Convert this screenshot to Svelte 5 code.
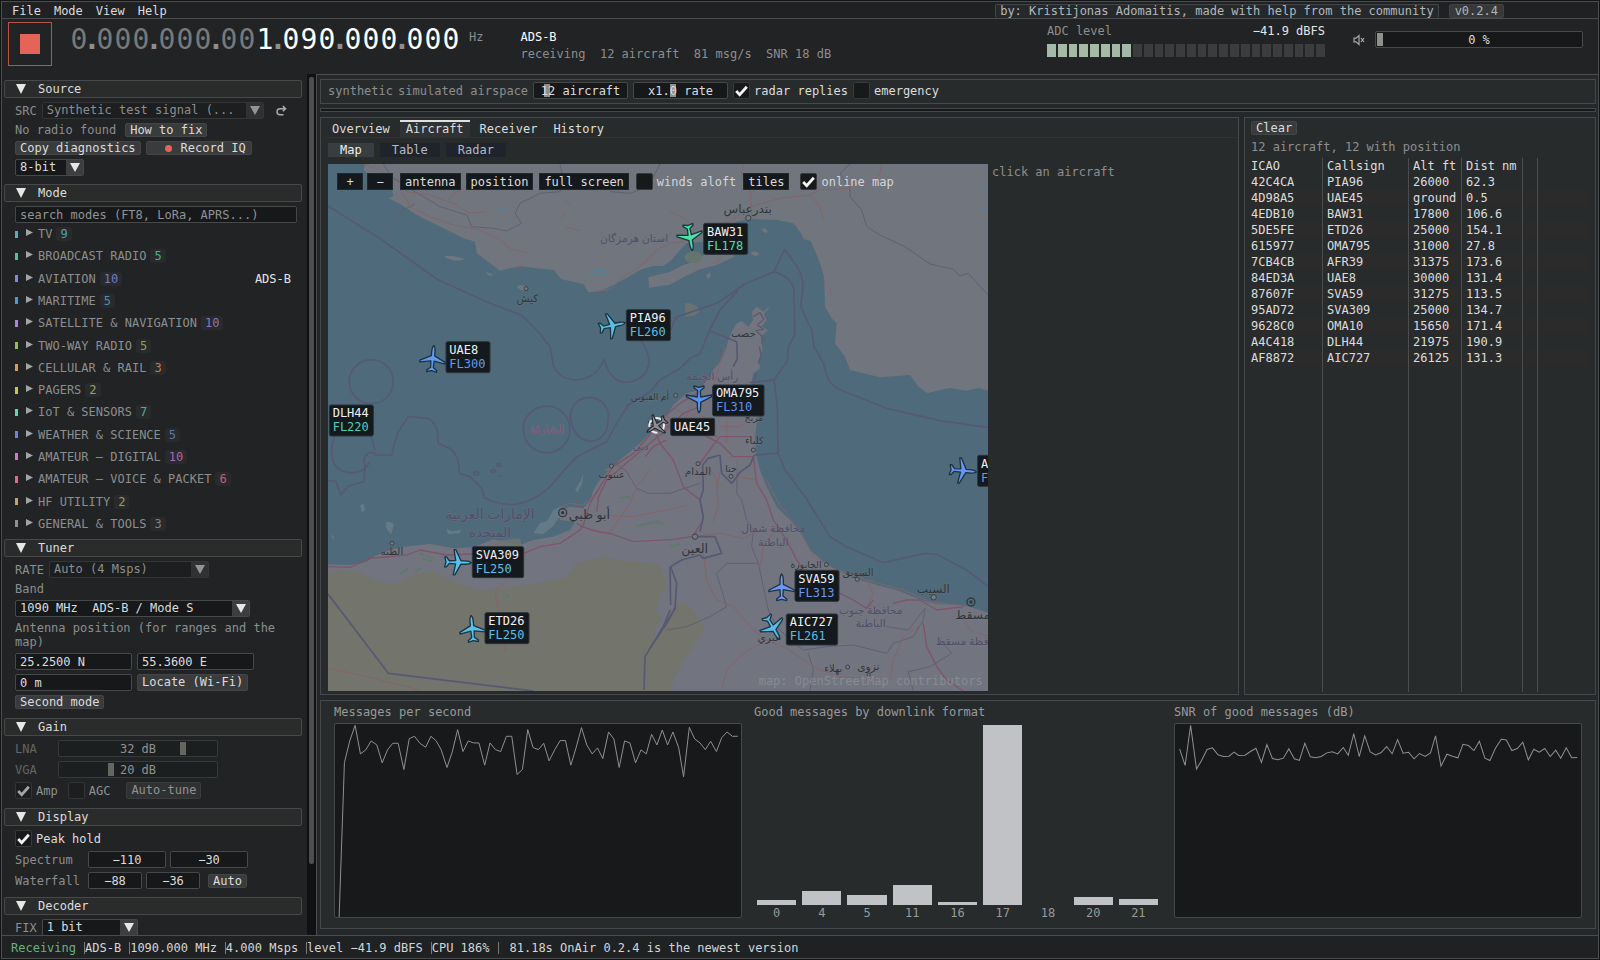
<script>
  const menus = ['File', 'Mode', 'View', 'Help'];

  const frequency = [...'0.000.000.001.090.000.000'].map((char, i) => ({ char, lit: i >= 12 }));

  const meter = Array.from({ length: 26 }, (_, i) => i < 8);

  const modes = [
    { name: 'TV', count: 9, color: '#5aa9cc', text: '#4fa3ac' },
    { name: 'BROADCAST RADIO', count: 5, color: '#4fc596', text: '#4bb389' },
    { name: 'AVIATION', count: 10, color: '#8189dd', text: '#737cc0', current: 'ADS-B' },
    { name: 'MARITIME', count: 5, color: '#4b9cc8', text: '#4a8fb5' },
    { name: 'SATELLITE & NAVIGATION', count: 10, color: '#ab84dc', text: '#8e74b8' },
    { name: 'TWO-WAY RADIO', count: 5, color: '#8fbf5f', text: '#8ba253' },
    { name: 'CELLULAR & RAIL', count: 3, color: '#d19f5a', text: '#b5834f' },
    { name: 'PAGERS', count: 2, color: '#c8c755', text: '#a0a44c' },
    { name: 'IoT & SENSORS', count: 7, color: '#66d3b3', text: '#54ab93' },
    { name: 'WEATHER & SCIENCE', count: 5, color: '#6b85dc', text: '#5f74b5' },
    { name: 'AMATEUR – DIGITAL', count: 10, color: '#cf7acb', text: '#b064ae' },
    { name: 'AMATEUR – VOICE & PACKET', count: 6, color: '#e06d81', text: '#c75c75' },
    { name: 'HF UTILITY', count: 2, color: '#bba673', text: '#9d9a64' },
    { name: 'GENERAL & TOOLS', count: 3, color: '#8e9194', text: '#808386' }
  ];

  const aircraft = [
    ['42C4CA', 'PIA96', '26000', '62.3'],
    ['4D98A5', 'UAE45', 'ground', '0.5'],
    ['4EDB10', 'BAW31', '17800', '106.6'],
    ['5DE5FE', 'ETD26', '25000', '154.1'],
    ['615977', 'OMA795', '31000', '27.8'],
    ['7CB4CB', 'AFR39', '31375', '173.6'],
    ['84ED3A', 'UAE8', '30000', '131.4'],
    ['87607F', 'SVA59', '31275', '113.5'],
    ['95AD72', 'SVA309', '25000', '134.7'],
    ['9628C0', 'OMA10', '15650', '171.4'],
    ['A4C418', 'DLH44', '21975', '190.9'],
    ['AF8872', 'AIC727', '26125', '131.3']
  ];

  const formats = [
    ['0', 5], ['4', 14], ['5', 10], ['11', 20], ['16', 3], ['17', 180], ['18', 0], ['20', 8], ['21', 6]
  ];

  const messageLine =
    '73,711 86,245 99,180 112,133 125,219 138,207 151,180 165,192 178,246 191,207 204,187 217,187 231,266 244,173 257,166 270,187 284,199 297,166 310,180 322,207 336,260 349,213 362,146 375,212 388,180 401,186 414,186 428,253 441,186 454,206 467,212 481,166 494,166 507,281 520,266 533,146 546,200 559,206 572,187 585,240 599,206 612,179 625,179 638,253 651,200 664,140 677,192 690,219 703,201 716,233 730,153 743,174 756,260 769,180 782,186 796,246 809,207 822,219 835,160 848,192 861,147 874,192 887,153 901,200 913,288 927,139 940,174 953,186 966,206 979,181 993,212 1006,170 1019,153 1032,166 1045,166';
  const snrLine =
    '570,208 583,257 596,136 610,268 622,242 635,209 648,204 661,225 674,230 687,229 699,217 710,227 725,226 738,215 751,205 764,248 777,194 790,236 803,240 816,235 829,207 842,237 854,242 867,190 880,231 893,234 906,230 919,219 932,216 945,222 958,203 970,226 983,161 996,230 1009,168 1022,216 1035,225 1048,218 1061,200 1074,222 1087,179 1100,220 1113,217 1126,237 1139,221 1152,230 1165,219 1177,168 1190,259 1204,223 1217,229 1230,234 1242,193 1255,197 1268,212 1281,184 1294,235 1306,242 1319,205 1333,178 1345,180 1358,212 1371,206 1384,187 1397,240 1410,208 1423,217 1436,206 1449,230 1462,211 1474,235 1487,204 1500,234 1513,233';

  // Map geometry: three units to a pixel.
  const borders = [
    'M24,138 L180,236 L355,360 L500,425 L605,466 L650,510 L690,560 L697,600 Q705,655 765,660 Q830,658 852,597 Q870,665 918,667 Q985,660 988,600 Q980,555 950,530',
    'M1045,525 L1068,472 L1190,430 L1275,372 L1362,335 L1394,268 L1430,318 Q1452,350 1448,390 L1442,440 L1475,510 L1482,560 L1512,612 Q1520,680 1575,695 L1700,745 L1860,782 L2003,802',
    'M1362,335 Q1415,350 1422,392 L1424,525 L1405,560 L1402,602 L1362,660 L1372,740 L1374,880',
    'M1255,390 L1200,450 L1168,512 L1140,582 L1110,595 L1080,625 L1020,660 L990,695 L925,735 L890,790 L860,845 L800,875 L770,890 L720,945 Q660,1025 580,1034 Q530,1035 492,1012 L485,985 L450,950 L418,940 Q420,895 395,868 L355,850 L353,820 Q350,790 325,775 L265,770 L235,815 L220,862 L216,885 L165,885',
    'M24,962 L48,964 L62,1005 L85,978 L132,964 L135,915 Q125,890 150,877 Q165,875 165,885',
    'M88,665 a66,66 0 1 0 132,0 a66,66 0 1 0 -132,0',
    'M35,880 Q38,938 100,938 Q138,935 148,905 M165,870 Q155,825 145,820 M35,880 Q35,845 45,830',
    'M610,808 a70,70 0 1 0 140,0 a70,70 0 1 0 -140,0',
    'M752,780 a57,57 0 1 1 112,0 Q860,842 810,844 Q765,840 752,780',
    'M1290,668 L1362,660 M1303,885 L1374,880',
    'M1374,880 L1395,930 L1455,1010 L1530,1130 L1580,1160 L1690,1208 L1815,1180 L1850,1183 L1940,1230 L2003,1278',
    'M1168,512 L1250,545 L1252,595 L1240,620',
    'M24,1302 L205,1540 L640,1593',
    'M1052,1335 L1050,1220 M1050,1350 L1030,1400 L975,1490 L972,1590 M990,1465 L1045,1382 L1065,1345',
    'M990,1465 L1065,1345 L1070,1270 L1052,1220 L1085,1200 L1140,1185 L1150,1195 L1205,1180 L1185,1130 L1120,1130',
    'M1140,1115 L1150,1070 L1140,1020 L1150,990 L1148,915 L1165,895 L1200,885 L1205,940 L1235,970 L1262,935 L1290,915 L1303,885'
  ];
  const thinBorders = [
    'M190,12 L215,50 L285,95 L360,140 L440,165 L455,200 L520,205 L560,213 L605,190 L585,160 L600,130 L660,100 L720,95 L730,60 L720,12',
    'M870,95 L930,100 L985,80 L1020,12',
    'M1590,85 L1590,110 L1625,150 L1640,200 L1680,225 L1755,260 L1830,312 L1900,328 L1920,348 L1945,340 L2003,404',
    'M1560,40 L1590,12 M1560,40 L1590,85',
    'M180,236 L240,155 L285,132',
    'M820,860 L920,935 L950,985 L985,1000 L1050,1000 L1140,970',
    'M1252,920 L1250,1000 L1265,1020 L1280,1080 L1300,1110 L1295,1160 L1315,1210 L1220,1210 L1190,1240 L1205,1290 L1220,1340 L1170,1370 L1100,1400 L1040,1410',
    'M1315,1210 L1330,1280 L1345,1350 L1370,1400 L1410,1440 L1450,1470 L1520,1460 L1600,1455 L1700,1480 L1720,1450 L1780,1430 L1810,1380 L1815,1345',
    'M1700,1400 L1765,1410 L1815,1345 M1765,1535 L1830,1520 L1895,1480 L1860,1440',
    'M1470,1593 L1480,1530 L1465,1480 M1765,1535 L1780,1593'
  ];
  const motorways = [
    'M24,1220 L90,1222 L150,1195 L260,1185 L300,1170 L380,1185 L460,1182 L600,1185 L660,1160 L720,1150 L780,1110 L790,1095',
    'M790,1095 L810,1030 L840,980 L880,920 L940,880 L985,830 L1010,790 L1080,730 L1130,700 L1160,650',
    'M830,1055 L836,1010 L860,960 L930,900 L990,850 L1050,800 L1090,760 L1140,740',
    'M770,1090 Q810,1115 870,1120 L940,1145 L1060,1138 L1115,1130 L1130,1115',
    'M1000,800 L1020,850 L1060,900 L1090,980 L1140,1020 L1150,1080 L1120,1125',
    'M1145,780 L1160,830 L1200,850 L1240,890 L1300,890 M1140,910 L1180,855 L1200,830 L1290,830',
    'M1300,890 L1310,970 L1340,1020 L1360,1080 L1400,1140 L1430,1200 L1460,1240',
    'M1560,1300 L1600,1320 L1640,1345 L1660,1320 M1720,1330 L1760,1320 L1800,1320 L1850,1350 L1930,1340',
    'M1810,1390 L1820,1460 L1850,1520 L1880,1560 L1930,1593',
    'M1040,840 L1000,860 L975,890 M1000,820 L1060,790 L1150,800 L1190,830'
  ];
  const roads = [
    'M130,12 L180,30 L240,70 L260,95 L330,105 L400,130 L450,160 L500,155',
    'M245,95 L270,140 L330,170 L400,195 L480,210 L540,240 L575,268 L620,278',
    'M385,120 L400,100 L440,80 M580,323 L610,318',
    'M735,120 L755,140 M735,155 L725,175 M735,200 L780,212',
    'M820,395 L870,388 L910,350 L960,320 L1010,270 L1050,250 L1090,245 L1110,225',
    'M1050,153 L1100,180 L1125,200 M1180,310 L1200,300',
    'M1110,225 L1180,200 L1230,185 L1290,140 L1380,115 L1470,105 L1500,90 L1590,85 M1470,105 L1500,140 L1510,180 M1650,70 L1680,40 L1685,12',
    'M1295,170 L1292,100 L1265,50 L1270,12',
    'M1530,385 L1535,405',
    'M1340,960 L1370,1020 L1410,1075 L1450,1130 L1480,1190 L1540,1225 L1640,1260 L1750,1290 L1830,1325 L1910,1335',
    'M1115,1130 L1200,1120 L1270,1135 L1320,1110 M1160,910 L1190,960 L1195,1040 L1180,1085',
    'M1200,930 L1190,990 M1250,900 L1255,950 L1310,960',
    'M1150,1180 L1160,1260 L1190,1320 L1240,1340 L1300,1410 L1340,1440 L1400,1465 L1450,1500 L1490,1525',
    'M1340,1440 L1270,1480 L1220,1530 L1205,1590 M1320,1220 L1330,1160 L1370,1100',
    'M1810,1390 L1750,1430 L1720,1500 L1710,1560 M1490,1525 L1560,1550 L1700,1560',
    'M990,930 L950,980 L930,1030 L860,1130 M800,1065 L940,1070 L1040,1050 L1100,1035',
    'M560,1260 L525,1295 L540,1370 L556,1475',
    'M24,1525 L100,1540 L180,1560 L300,1590',
    'M720,1045 L745,1030 L790,1035 L850,980 M1180,680 L1200,610 L1215,560',
    'M2003,1430 L1950,1410 L1930,1370 M1640,1260 L1660,1300 L1640,1345',
    'M1040,770 L1080,790 L1130,760 L1170,780 M1060,740 L1100,770 L1120,720 M1200,800 L1260,800 L1290,770 M1220,780 L1220,850'
  ];

  const places = [
    [1283, 160, 36, 'بندرعباس', 'town'],
    [942, 245, 32, 'استان هرمزگان', 'region'],
    [622, 425, 32, 'کیش', 'town'],
    [1270, 532, 30, 'خصب', 'town'],
    [1177, 660, 32, 'رأس الخيمة', 'region'],
    [990, 720, 28, 'أم القيوين', 'town'],
    [680, 818, 32, 'الشارقة', 'pink'],
    [1006, 788, 32, 'دبي', 'town'],
    [962, 870, 30, 'دبي', 'region'],
    [1302, 782, 28, 'مربح', 'town'],
    [1303, 852, 30, 'كلباء', 'town'],
    [874, 954, 30, 'غنتوت', 'town'],
    [1134, 946, 30, 'المدام', 'town'],
    [1233, 936, 28, 'حتا', 'town'],
    [808, 1076, 38, 'أبو ظبي', 'town'],
    [510, 1078, 42, 'الإمارات العربية', 'region'],
    [510, 1130, 40, 'المتحدة', 'region'],
    [216, 1186, 30, 'الظنة', 'town'],
    [1124, 1178, 38, 'العين', 'town'],
    [1360, 1116, 32, 'محافظة شمال', 'region'],
    [1360, 1158, 32, 'الباطنة', 'region'],
    [1458, 1224, 28, 'الخابورة', 'town'],
    [1614, 1248, 30, 'السويق', 'town'],
    [1840, 1298, 36, 'السيب', 'town'],
    [1652, 1362, 32, 'محافظة جنوب', 'region'],
    [1652, 1402, 32, 'الباطنة', 'region'],
    [1958, 1378, 36, 'مسقط', 'town'],
    [1950, 1455, 32, 'محافظة مسقط', 'region'],
    [1348, 1442, 32, 'عبري', 'town'],
    [1540, 1535, 30, 'بهلاء', 'town'],
    [1645, 1530, 32, 'نزوى', 'town']
  ];
  const dots = [
    [1285, 174, 8], [618, 386, 6], [1067, 706, 6], [1300, 870, 6], [874, 918, 6], [1134, 911, 6],
    [1233, 949, 6], [216, 1150, 6], [1125, 1130, 8], [1519, 1214, 6], [1612, 1258, 6], [1841, 1312, 8], [1583, 1521, 6], [1646, 1544, 5]
  ];

  const flights = [
    { x: 338, y: 598, turn: 5, color: '#6199ef', bx: 378, by: 545, id: 'UAE8', fl: 'FL300', chars: 5 },
    { x: 875, y: 497, turn: 78, color: '#59bfe6', bx: 919, by: 449, id: 'PIA96', fl: 'FL260', chars: 5 },
    { x: 1110, y: 230, turn: 170, color: '#4fe0a6', bx: 1151, by: 190, id: 'BAW31', fl: 'FL178', chars: 5 },
    { x: 1137, y: 716, turn: 180, color: '#5c90f2', bx: 1178, by: 675, id: 'OMA795', fl: 'FL310', chars: 6 },
    { x: 412, y: 1207, turn: 92, color: '#59c0ea', bx: 457, by: 1160, id: 'SVA309', fl: 'FL250', chars: 6 },
    { x: 457, y: 1408, turn: -5, color: '#59c0ea', bx: 495, by: 1358, id: 'ETD26', fl: 'FL250', chars: 5 },
    { x: 1385, y: 1284, turn: 0, color: '#6b98f6', bx: 1425, by: 1231, id: 'SVA59', fl: 'FL313', chars: 5 },
    { x: 1358, y: 1402, turn: 150, color: '#55bde8', bx: 1399, by: 1362, id: 'AIC727', fl: 'FL261', chars: 6 },
    { x: 1927, y: 932, turn: 95, color: '#6695f2', bx: 1973, by: 886, id: 'AFR39', fl: 'FL313', chars: 5 },
    { bx: 28, by: 735, color: '#4bcfb4', id: 'DLH44', fl: 'FL220', chars: 5 },
    { bx: 1052, by: 775, color: '#eee', id: 'UAE45', chars: 5 }
  ];
  const plane =
    'M0,-42 C4,-38 5,-30 5,-22 L5,-11 L38,6 L38,11 L5,5 L4,24 L15,33 L15,38 L0,34 L-15,38 L-15,33 L-4,24 L-5,5 L-38,11 L-38,6 L-5,-11 L-5,-22 C-5,-30 -4,-38 0,-42Z';
</script>

{#snippet check(label, on = false, disabled = false)}
  <label class="check" class:disabled>
    <span class="box">
      <input type="checkbox" checked={on} {disabled} />
      <svg viewBox="0 0 16 16" aria-hidden="true"><path d="M3 8.5 6.3 12 13 4.5" /></svg>
    </span>
    <span>{label}</span>
  </label>
{/snippet}

{#snippet combo(label, value, size, disabled = false)}
  <span class="combo {size}" class:disabled>
    <select aria-label={label} {disabled}><option>{value}</option></select>
    <svg viewBox="0 0 17 15" aria-hidden="true"><path d="M4 3h10L9 12z" /></svg>
  </span>
{/snippet}

{#snippet slider(label, text, min, max, value, size, disabled = false)}
  <span class="slider {size}" class:disabled>
    <input type="range" aria-label={label} {min} {max} step="any" {value} {disabled} />
    <output>{text}</output>
  </span>
{/snippet}

{#snippet head(title)}
  <button class="head">
    <svg viewBox="0 0 10 10" aria-hidden="true"><path d="M0 0h10L5 10z" /></svg>
    {title}
  </button>
{/snippet}

<div class="app">
  <div class="frame">
    <nav class="menubar">
      {#each menus as item}<button>{item}</button>{/each}
      <a class="credit" href="#community">by: Kristijonas Adomaitis, made with help from the community</a>
      <span class="version">v0.2.4</span>
    </nav>

    <header class="header">
      <button class="stop" aria-label="Stop"><span></span></button>
      <div class="freq">
        {#each frequency as cell}
          <span class:lit={cell.lit} class:dot={cell.char === '.'}>{cell.char}</span>
        {/each}
      </div>
      <span class="unit">Hz</span>
      <div class="decoder">
        <strong>ADS-B</strong>
        <p>receiving  12 aircraft  81 msg/s  SNR 18 dB</p>
      </div>
      <div class="adc">
        <div class="adc-text"><span>ADC level</span><b>−41.9 dBFS</b></div>
        <div class="meter">{#each meter as on}<i class:on></i>{/each}</div>
      </div>
      <div class="volume">
        <button class="mute" aria-label="Muted">
          <svg viewBox="0 0 12 12"><path d="M1 4.2h2L6 1.5v9L3 7.8H1z" /><path d="M8 4l3 4M11 4l-3 4" /></svg>
        </button>
        {@render slider('Volume', '0 %', 0, 100, 0, 'fill')}
      </div>
    </header>

    <div class="body">
      <aside class="sidebar">
        <div class="scroll">
          <section>
            {@render head('Source')}
            <div class="row">
              <span class="dim">SRC</span>
              {@render combo('Source', 'Synthetic test signal (...', 'w222', true)}
              <button class="reload" aria-label="Reload">
                <svg viewBox="0 0 12 12"><path d="M9.5 4H5.2a2.6 2.6 0 0 0 0 5.2h3M7.6 1.8 9.9 4 7.6 6.2" /></svg>
              </button>
            </div>
            <div class="row low wide"><span class="dim">No radio found</span><button class="btn">How to fix</button></div>
            <div class="row low">
              <button class="btn">Copy diagnostics</button>
              <button class="btn record"><i></i>Record IQ</button>
            </div>
            <div class="row">{@render combo('Bit depth', '8-bit', 'w69')}</div>
          </section>

          <section class="modes">
            {@render head('Mode')}
            <div class="row"><input class="search" type="text" aria-label="Search modes" placeholder="search modes (FT8, LoRa, APRS...)" /></div>
            <ul>
              {#each modes as mode}
                <li>
                  <i style:background={mode.color}></i>
                  <svg viewBox="0 0 7 7" aria-hidden="true"><path d="M0 0l7 3.5L0 7z" /></svg>
                  <span>{mode.name}</span>
                  <em style:color={mode.text}>{mode.count}</em>
                  {#if mode.current}<b>{mode.current}</b>{/if}
                </li>
              {/each}
            </ul>
          </section>

          <section>
            {@render head('Tuner')}
            <div class="row"><span class="dim">RATE</span>{@render combo('Sample rate', 'Auto (4 Msps)', 'w160', true)}</div>
            <div class="row low dim">Band</div>
            <div class="row">{@render combo('Band', '1090 MHz\u00a0 ADS-B / Mode S', 'w235')}</div>
            <p class="note">Antenna position (for ranges and the map)</p>
            <div class="row">
              <input class="field w117" type="text" aria-label="Latitude" value="25.2500 N" />
              <input class="field w117" type="text" aria-label="Longitude" value="55.3600 E" />
            </div>
            <div class="row">
              <input class="field w117" type="text" aria-label="Antenna height" value="0 m" />
              <button class="btn tall">Locate (Wi-Fi)</button>
            </div>
            <div class="row low"><button class="btn">Second mode</button></div>
          </section>

          <section>
            {@render head('Gain')}
            <div class="row gain">
              <span>LNA</span>{@render slider('LNA gain', '32 dB', 0, 40, 32, 'w160', true)}
            </div>
            <div class="row gain">
              <span>VGA</span>{@render slider('VGA gain', '20 dB', 0, 62, 20, 'w160', true)}
            </div>
            <div class="row amp">
              {@render check('Amp', true, true)}
              {@render check('AGC', false, true)}
              <button class="btn tall" disabled>Auto-tune</button>
            </div>
          </section>

          <section>
            {@render head('Display')}
            <div class="row">{@render check('Peak hold', true)}</div>
            <div class="row range">
              <span class="dim">Spectrum</span>
              <input class="field mid w78" type="text" aria-label="Spectrum low" value="−110" />
              <input class="field mid w78" type="text" aria-label="Spectrum high" value="−30" />
            </div>
            <div class="row range">
              <span class="dim">Waterfall</span>
              <input class="field mid w54" type="text" aria-label="Waterfall low" value="−88" />
              <input class="field mid w54" type="text" aria-label="Waterfall high" value="−36" />
              <button class="btn auto">Auto</button>
            </div>
          </section>

          <section>
            {@render head('Decoder')}
            <div class="row"><span class="dim">FIX</span>{@render combo('Error correction', '1 bit', 'w96')}</div>
          </section>
        </div>
        <div class="track"><span></span></div>
      </aside>

      <main class="main">
        <div class="panel sim">
          <span class="dim">synthetic</span>
          <span class="dim">simulated airspace</span>
          {@render slider('Aircraft count', '12 aircraft', 3, 90, 12, 'w95')}
          {@render slider('Message rate', 'x1.0 rate', 0, 2.4, 1, 'w95')}
          {@render check('radar replies', true)}
          {@render check('emergency')}
        </div>
        <div class="panel strip"></div>

        <div class="middle">
          <div class="panel view">
            <div class="tabs">
              <button>Overview</button><button class="on">Aircraft</button><button>Receiver</button><button>History</button>
            </div>
            <div class="subtabs">
              <button class="on">Map</button><button>Table</button><button>Radar</button>
            </div>
            <div class="split">
              <div class="map">
                <svg class="chart" viewBox="24 12 1980 1581" preserveAspectRatio="xMidYMid slice">
                  <rect x="0" y="0" width="2040" height="1620" fill="#4f6a7b" />
                  <g fill="#71757e">
                    <path d="M140,0 L130,30 165,60 215,85 220,108 205,115 240,132 290,165 370,205 430,235 465,245 470,280 490,295 540,332 600,318 650,325 700,330 725,358 790,372 805,397 840,394 890,370 930,348 960,330 1000,318 1030,318 1055,300 1080,270 1100,250 1150,245 1190,215 1250,185 1290,177 1370,180 1420,190 1440,215 1452,238 1472,243 1490,285 1500,310 1512,350 1515,440 1535,475 1550,490 1545,550 1575,590 1590,630 1680,652 1770,645 1795,680 1822,700 1860,690 1890,684 1940,692 1975,684 2040,700 2040,0Z" />
                    <path d="M985,352 L1050,335 1090,315 1120,305 1160,280 1210,270 1235,262 1248,275 1240,292 1190,315 1140,328 1090,352 1050,374 988,383Z" />
                    <path d="M372,288 Q400,285 436,298 Q400,310 372,288Z M498,338 Q510,335 520,346 Q505,350 498,338Z M1325,208 q12,-8 18,6 q-8,12 -18,-6Z M1292,278 q18,-8 26,4 q-12,14 -26,-4Z M1158,345 l12,-8 2,12 -8,10Z M590,380 q18,-12 34,6 q-14,14 -34,-6Z" />
                  </g>
                  <path fill="#72757f" d="M0,1213 L90,1215 140,1205 165,1188 210,1170 250,1160 330,1152 400,1165 460,1162 520,1138 600,1155 640,1140 700,1130 750,1110 765,1085 720,1080 710,1055 750,1040 790,1045 812,1020 818,995 835,965 870,930 900,900 930,875 960,850 985,825 1005,790 1040,765 1060,735 1100,700 1140,690 1180,630 1205,600 1220,560 1225,540 1235,515 1250,490 1265,482 1285,500 1300,480 1295,455 1310,440 1330,455 1355,435 1332,462 1340,480 1325,500 1345,510 1322,530 1328,570 1315,600 1320,625 1300,640 1295,665 1298,700 1318,740 1312,780 1305,830 1308,880 1320,930 1340,980 1370,1040 1410,1080 1445,1125 1470,1170 1510,1205 1550,1230 1610,1257 1680,1277 1730,1290 1780,1310 1820,1325 1850,1332 1920,1335 1950,1340 2040,1370 2040,1620 0,1620Z" />
                  <path fill="#6f746f" d="M540,1140 L600,1135 605,1160 520,1160Z M850,930 l25,-12 -4,18Z M1095,430 Q1120,425 1140,450 Q1130,472 1095,470Z" opacity=".8" />
                  <ellipse cx="1120" cy="292" rx="26" ry="18" fill="#65746d" />
                  <path fill="#73746c" d="M0,1240 L60,1230 120,1237 170,1262 220,1272 290,1240 340,1235 400,1265 480,1290 560,1282 640,1270 700,1262 740,1250 770,1210 850,1190 920,1205 1000,1210 1020,1220 1040,1270 1035,1310 1045,1355 1010,1400 1000,1450 1050,1350 1090,1325 1120,1350 1155,1400 1140,1430 1100,1490 1060,1560 1045,1620 0,1620Z" />
                  <path fill="#72757f" d="M1020,1300 L1052,1290 1060,1340 1030,1380 1010,1360Z" />
                  <path fill="none" stroke="#5f7a69" stroke-width="6" d="M300,1180 l40,16 M310,1196 l25,8 M240,1240 l25,-14 M285,1235 l20,-12 M950,1098 l70,-14 M930,1010 l-30,4 M555,1303 l14,8 M990,1086 l45,6 M1050,1160 l30,-8" />
                  <path fill="none" stroke="#5b7f92" stroke-width="4" d="M820,332 h36 M810,344 h48 M540,146 h20 M565,185 l14,10 M1985,70 h18 M1988,85 h15 M1984,100 h18 M1990,125 h13 M1986,145 h16 M1755,503 l16,8 M1530,170 v12" />
                  <path fill="#657a87" d="M120,1035 l12,-4 2,20 -8,8Z M198,1088 q12,-8 24,6 l-8,28 q-18,-10 -16,-34Z M640,1120 l20,-30 24,-10 16,-30 26,-12 -6,30 -20,30 -30,24Z M765,990 l18,-30 8,-20 -4,30 -14,26Z M34,1122 l8,10 -4,8Z M380,1106 l14,8 30,-4 -6,10 -34,2Z" />
                  <g fill="none" stroke-linejoin="round">
                    {#each thinBorders as d}<path {d} stroke="#625f74" stroke-width="3" />{/each}
                    {#each roads as d}<path {d} stroke="#85646a" stroke-width="3" />{/each}
                    {#each motorways as d}<path {d} stroke="#80546a" stroke-width="4" />{/each}
                    {#each borders as d}<path {d} stroke="#565973" stroke-width="5" />{/each}
                    <path d="M462,936 h14 v8 h-14z M512,932 l10,-4 6,6 -12,4z M530,912 l10,-2 2,8 -8,2z M536,948 l8,0" stroke="#505a74" stroke-width="4" />
                    <path d="M1300,470 l20,-12 12,20 -20,16 18,14 -22,4 24,22 -8,16 M1318,560 l6,30 -10,20 M1310,640 l-8,24" stroke="#5c5a74" stroke-width="4" />
                  </g>
                  {#each dots as [cx, cy, r]}<circle {cx} {cy} {r} fill="#767a82" stroke="#3c4047" stroke-width="3" />{/each}
                  {#each [[728, 1058], [1953, 1326]] as [cx, cy]}
                    <circle {cx} {cy} r="12" fill="none" stroke="#33383e" stroke-width="4" /><circle {cx} {cy} r="5" fill="#33383e" />
                  {/each}
                  {#each places as [x, y, size, name, kind]}
                    <text class="place {kind}" {x} {y} font-size={size} text-anchor="middle">{name}</text>
                  {/each}
                  <text class="osm" x="1316" y="1576">map: OpenStreetMap contributors</text>
                  <g transform="translate(1010 796)">
                    <circle r="22" fill="none" stroke="#eceded" stroke-width="6" stroke-dasharray="22 10" />
                    <path d={plane} transform="rotate(235) scale(.85)" fill="#8d9196" stroke="#24282c" stroke-width="4" />
                  </g>
                  {#each flights as f}
                    {#if f.x}
                      <path d={plane} transform="translate({f.x} {f.y}) rotate({f.turn})" fill={f.color} stroke="#1d3440" stroke-width="4" stroke-linejoin="round" />
                    {/if}
                    <rect x={f.bx} y={f.by} width={f.chars * 22 + 22} height={f.fl ? 93 : 52} rx="5" fill="#14191d" stroke="#2b3338" stroke-width="3" />
                    <text class="tag" x={f.bx + 10} y={f.by + 37} fill="#f0f1f2">{f.id}</text>
                    {#if f.fl}<text class="tag" x={f.bx + 10} y={f.by + 79} fill={f.color}>{f.fl}</text>{/if}
                  {/each}
                </svg>
                <div class="maptools">
                  <button class="sq">+</button><button class="sq">−</button>
                  <button>antenna</button><button>position</button><button class="screen">full screen</button>
                  {@render check('winds aloft')}
                  <button>tiles</button>
                  {@render check('online map', true)}
                </div>
              </div>
              <p class="hint">click an aircraft</p>
            </div>
          </div>

          <div class="panel list">
            <button class="btn">Clear</button>
            <p class="dim">12 aircraft, 12 with position</p>
            <table>
              <thead><tr><th>ICAO</th><th>Callsign</th><th>Alt ft</th><th>Dist nm</th><th></th><th></th></tr></thead>
              <tbody>
                {#each aircraft as row}
                  <tr>{#each row as cell}<td>{cell}</td>{/each}<td></td><td></td></tr>
                {/each}
                <tr class="rest"><td></td><td></td><td></td><td></td><td></td><td></td></tr>
              </tbody>
            </table>
          </div>
        </div>

        <div class="panel stats">
          <figure>
            <figcaption>Messages per second</figcaption>
            <div class="plot">
              <svg viewBox="63 129 990 581" preserveAspectRatio="none"><polyline points={messageLine} /></svg>
            </div>
          </figure>
          <figure>
            <figcaption>Good messages by downlink format</figcaption>
            <div class="columns">
              {#each formats as [name, height]}
                <div><i style:height="{height}px"></i><span>{name}</span></div>
              {/each}
            </div>
          </figure>
          <figure>
            <figcaption>SNR of good messages (dB)</figcaption>
            <div class="plot">
              <svg viewBox="559 132 963 582" preserveAspectRatio="none"><polyline points={snrLine} /></svg>
            </div>
          </figure>
        </div>
      </main>
    </div>

    <footer class="status">
      <span class="ok">Receiving</span>
      <span>ADS-B</span><span>1090.000 MHz</span><span>4.000 Msps</span><span>level −41.9 dBFS</span><span>CPU 186%</span>
      <span class="last">81.18s OnAir 0.2.4 is the newest version</span>
    </footer>
  </div>
</div>

<style>
  :global(body) { margin: 0; background: #131415; }
  .app, .app * { box-sizing: border-box; }
  .app {
    height: 100vh; padding: 1px; overflow: hidden;
    font: 12px/14px "DejaVu Sans Mono", monospace; color: #dcddde;
  }
  .frame { height: 100%; display: flex; flex-direction: column; border: 1px solid #4a4c4e; background: #212324; }
  button, input, select { font: inherit; color: inherit; margin: 0; }
  button { background: none; border: 0; padding: 0; white-space: nowrap; }
  p, figure, ul { margin: 0; padding: 0; }
  svg { display: block; }
  .dim { color: #8c8e8f; }

  .menubar { display: flex; align-items: center; gap: 13px; flex: none; height: 17px; padding: 2px 94px 0 10px; border-bottom: 1px solid #4a4c4e; background: #1f2122; }
  .credit { margin-left: auto; padding: 0 4px; border: 1px solid #43474a; border-bottom: 0; border-radius: 2px; background: #25292b; color: #b3b8bc; text-decoration: none; white-space: nowrap; line-height: 13px; }
  .version { padding: 0 5px; margin-left: -3px; border-radius: 2px; background: #36393b; color: #aeb3b7; border: 1px solid #3f4244; line-height: 12px; }

  .header { display: flex; align-items: flex-start; flex: none; height: 55px; }
  .stop { flex: none; width: 44px; height: 44px; margin: 3px 18px 0 6px; border: 1px solid #b5524c; display: grid; place-items: center; }
  .stop span { width: 20px; height: 20px; background: #e6635a; }
  .freq { display: flex; margin-top: 4px; font-size: 28px; line-height: 33px; color: #77797a; }
  .freq span { width: 18px; display: flex; justify-content: center; }
  .freq .lit { color: #fff; }
  .freq .dot { width: 8px; color: #8c8e8f; font-weight: 700; }
  .unit { margin: 11px 0 0 9px; color: #8c8e8f; }
  .decoder { margin: 11px 0 0 37px; }
  .decoder strong { color: #fff; font-weight: 400; }
  .decoder p { margin-top: 3px; white-space: pre; color: #8c8e8f; }
  .adc { width: 278px; margin: 5px 0 0 auto; }
  .adc-text { display: flex; justify-content: space-between; color: #8c8e8f; }
  .adc-text b { font-weight: 400; color: #e4e5e6; }
  .meter { display: flex; gap: 2px; height: 13px; margin-top: 6px; }
  .meter i { flex: 1; background: #3a3c3d; }
  .meter .on { background: #a4b9a6; }
  .volume { display: flex; align-items: center; gap: 10px; width: 230px; margin: 12px 15px 0 28px; }
  .mute svg { width: 12px; height: 12px; fill: none; stroke: #a9abac; stroke-width: 1.2; }

  .slider { display: grid; height: 17px; border: 1px solid #46484a; border-radius: 2px; background: #17181a; }
  .slider > * { grid-area: 1 / 1; }
  .slider output { display: grid; place-items: center; pointer-events: none; z-index: 1; color: #dcddde; }
  .slider input { appearance: none; width: 100%; height: 15px; padding: 0 1px; background: none; }
  .slider input::-webkit-slider-thumb { appearance: none; width: 6px; height: 13px; background: #908f89; }
  .slider.fill { flex: 1; }
  .slider.disabled { border-color: #36383a; background: #1c1f20; }
  .slider.disabled output { color: #8f9192; }
  .slider.disabled input::-webkit-slider-thumb { background: #666661; }
  .w160 { width: 160px; }
  .w95 { width: 95px; }
  .w222 { width: 222px; }
  .w235 { width: 235px; }
  .w69 { width: 69px; }
  .w96 { width: 96px; }
  .w117 { width: 117px; }
  .w78 { width: 78px; }
  .w54 { width: 54px; }

  .check { display: flex; align-items: center; gap: 4px; white-space: nowrap; }
  .box { display: grid; width: 17px; height: 17px; }
  .box > * { grid-area: 1 / 1; }
  .box input { appearance: none; width: 17px; height: 17px; border: 1px solid #38393b; border-radius: 2px; background: #17191b; }
  .box svg { width: 17px; height: 17px; fill: none; stroke: #f2f3f3; stroke-width: 2.6; visibility: hidden; pointer-events: none; z-index: 1; }
  .box input:checked + svg { visibility: visible; }
  .check.disabled { color: #8f9192; }
  .check.disabled input { background: #1c1e20; border-color: #323436; }
  .check.disabled svg { stroke: #a3a5a6; }

  .combo { display: grid; grid-template-columns: 1fr 17px; height: 17px; border: 1px solid #46484a; border-radius: 2px; background: #17181a; overflow: hidden; }
  .combo select { grid-area: 1 / 1 / 2 / 3; appearance: none; border: 0; background: none; padding: 0 17px 0 4px; min-width: 0; height: 15px; line-height: 15px; }
  .combo svg { grid-area: 1 / 2; width: 17px; height: 15px; background: #3c3e40; fill: #e6e7e7; pointer-events: none; }
  .combo.disabled { border-color: #333537; background: #1c1e1f; }
  .combo.disabled select { color: #8c8e8f; opacity: 1; }
  .combo.disabled svg { background: #2f3132; fill: #929495; }

  .btn { height: 14px; padding: 0 4px; border: 1px solid #434547; border-radius: 2px; background: #393b3d; line-height: 12px; }
  .btn.tall { height: 17px; line-height: 15px; }
  .btn:disabled { background: #2f3132; border-color: #3a3c3e; color: #8f9192; }
  .field, .search { height: 17px; padding: 0 4px; border: 1px solid #46484a; border-radius: 2px; background: #17181a; }
  .mid { text-align: center; }
  .search { width: 282px; }
  .search::placeholder { color: #919394; }

  .body { flex: 1; min-height: 0; display: flex; }
  .sidebar { flex: none; width: 314px; display: flex; }
  .scroll { flex: 1; min-width: 0; overflow: hidden; padding: 6px 5px 0 2px; display: flex; flex-direction: column; gap: 9px; }
  .scroll section { flex: none; display: flex; flex-direction: column; gap: 4px; }
  .scroll section:last-child { margin-top: -1px; }
  .track { width: 9px; background: #101112; padding: 3px 2px; }
  .track span { display: block; height: 92%; background: #4c4e50; border-radius: 2px; }
  .head { display: flex; align-items: center; gap: 12px; height: 18px; padding: 0 11px; border: 1px solid #46484a; border-radius: 2px; background: #2a2b2b; }
  .head svg { width: 10px; height: 10px; fill: #e6e7e7; }
  .row { display: flex; align-items: center; height: 17px; gap: 5px; padding-left: 11px; }
  .row.low { height: 14px; }
  .row.wide { gap: 9px; }
  .reload { margin-left: 5px; }
  .reload svg { width: 14px; height: 14px; fill: none; stroke: #a9abac; stroke-width: 1.3; }
  .record { display: flex; align-items: center; padding: 0 5px 0 18px; gap: 9px; }
  .record i { width: 7px; height: 7px; border-radius: 50%; background: #e6635a; }
  .modes { margin: -1px 0 -5px; }
  .modes ul { list-style: none; height: 312px; margin-top: -4px; display: grid; grid-auto-rows: 1fr; }
  .modes li { display: flex; align-items: center; padding: 0 11px; color: #8c8e8f; }
  .modes li i { width: 3px; height: 7px; margin-right: 8px; }
  .modes li svg { width: 7px; height: 7px; margin: 0 5px 3px 0; fill: #a2a4a5; }
  .modes em { margin-left: 4px; padding: 0 4px; border-radius: 3px; background: #282a2b; font-style: normal; }
  .modes b { margin-left: auto; font-weight: 400; color: #e4e5e6; }
  .note { padding-left: 11px; color: #8c8e8f; }
  .gain { color: #636566; }
  .gain span:first-child { width: 38px; }
  .amp { gap: 10px; }
  .amp .btn { margin-left: 6px; }
  .range { gap: 4px; }
  .range .dim { width: 69px; }
  .auto { margin-left: 4px; }

  .main { flex: 1; min-width: 0; display: flex; flex-direction: column; padding: 4px 2px 6px 3px; border: 1px solid #4a4c4e; border-width: 1px 0 0 1px; background: #25282a; }
  .panel { border: 1px solid #464849; background: #282b2c; }
  .sim { flex: none; display: flex; align-items: center; gap: 5px; height: 25px; padding: 0 7px 2px; }
  .strip { flex: none; height: 4px; margin: 4px 0 5px; background: #17181a; }
  .middle { flex: 1; min-height: 0; display: grid; grid-template-columns: minmax(0, 1fr) 352px; gap: 5px; }
  .view { display: flex; flex-direction: column; min-width: 0; min-height: 0; padding: 2px 2px 3px 7px; }
  .tabs { display: flex; gap: 4px; flex: none; margin-left: -2px; border-bottom: 1px solid #303334; }
  .tabs button { height: 17px; padding: 0 6px; border-top: 2px solid transparent; line-height: 15px; }
  .tabs .on { background: #303233; border-color: #dfe0e0; }
  .subtabs { display: flex; gap: 6px; flex: none; margin: 5px 0 7px; }
  .subtabs button { padding: 0 12px; height: 14px; background: #1f232b; color: #b4b9c4; }
  .subtabs .on { background: #3a3d3f; color: #eee; }
  .split { flex: 1; min-height: 0; display: grid; grid-template-columns: minmax(0, 660fr) minmax(0, 244fr); gap: 4px; }
  .map { position: relative; min-height: 0; overflow: hidden; }
  .chart { width: 100%; height: 100%; }
  .place { font-family: "Noto Sans", "DejaVu Sans", sans-serif; fill: #2f343a; stroke: #7b8088; stroke-opacity: .4; stroke-width: 3; paint-order: stroke; direction: rtl; }
  .place.region { fill: #524d69; }
  .place.pink { fill: #7c5577; }
  .tag, .osm { font-size: 36px; white-space: pre; }
  .osm { fill: #8d9199; opacity: .8; }
  .maptools { position: absolute; left: 9px; top: 9px; display: flex; align-items: center; gap: 4px; color: #d3d6da; }
  .maptools > button { height: 17px; padding: 0 4px; margin-right: 1px; background: #14191d; border: 1px solid #22292e; color: #dcddde; line-height: 14px; }
  .maptools > .sq { width: 26px; margin-right: 0; }
  .maptools > .sq + .sq { margin-right: 3px; }
  .maptools > .screen { margin-left: 1px; }
  .maptools > :global(label) { margin: 0 3px 0 2px; }
  .maptools > :global(label:last-child) { margin-left: 6px; }
  .hint { color: #8c8e8f; margin-top: 1px; }

  .list { display: flex; flex-direction: column; align-items: flex-start; min-height: 0; padding: 3px 6px 2px; }
  .list p { margin: 5px 0 4px; }
  table { flex: 1; width: 100%; display: grid; grid-template-rows: auto 1fr; grid-template-columns: 72px 86px 53px 61px 15px 1fr; }
  thead, tbody, tr { display: grid; grid-template-columns: subgrid; grid-column: 1 / -1; }
  tbody { grid-template-rows: repeat(12, 16px) 1fr; }
  tbody tr:nth-child(even) { background: #2c2b2b; }
  th, td { padding: 0 0 0 4px; height: 16px; line-height: 16px; text-align: left; font-weight: 400; white-space: nowrap; border-right: 1px solid #4a4c4e; }
  th:first-child, td:first-child { padding-left: 0; }
  th:last-child, td:last-child { border-right: 0; }
  .rest td { height: auto; }

  .stats { flex: none; height: 229px; margin-top: 5px; display: grid; grid-template-columns: repeat(3, minmax(0, 1fr)); gap: 12px; padding: 4px 13px 10px; }
  figure { display: flex; flex-direction: column; min-height: 0; }
  figcaption { color: #979a9b; margin-bottom: 4px; }
  .plot { flex: 1; min-height: 0; border: 1px solid #46484a; border-radius: 2px; background: #18191a; }
  .plot svg { width: 100%; height: 100%; }
  polyline { fill: none; stroke: #8e9091; stroke-width: 1; vector-effect: non-scaling-stroke; }
  .columns { flex: 1; display: grid; grid-template-columns: repeat(9, 1fr); gap: 6px; margin-bottom: -2px; padding: 0 4px 0 3px; color: #979a9b; }
  .columns div { display: flex; flex-direction: column; justify-content: flex-end; text-align: center; }
  .columns i { background: #c0c2c5; margin-bottom: 1px; }

  .status { flex: none; display: flex; align-items: center; height: 23px; padding: 2px 0 0 9px; border-top: 1px solid #4a4c4e; background: #1f2122; color: #d4d6d7; white-space: nowrap; }
  .status span { margin-right: 8px; border-left: 1px solid #77797a; line-height: 12px; }
  .status .ok { border: 0; color: #67b183; }
  .status .last { padding-left: 11px; }
</style>
